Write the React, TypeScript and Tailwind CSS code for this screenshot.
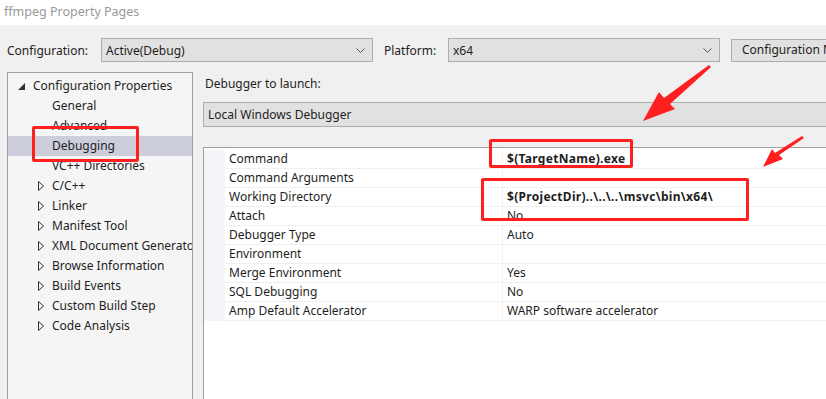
import React from "react";

const font = { fontFamily: '"Noto Sans", "Open Sans", sans-serif' };

function Chevron() {
  return (
    <svg width="9" height="6" viewBox="0 0 9 6" className="shrink-0">
      <polyline points="0.5,0.5 4.5,4.5 8.5,0.5" fill="none" stroke="#555" strokeWidth="1" />
    </svg>
  );
}

function Collapsed() {
  return (
    <svg width="6" height="10" viewBox="0 0 6 10" className="shrink-0">
      <polygon points="0.5,0.5 5.5,5 0.5,9.5" fill="none" stroke="#333" strokeWidth="1" />
    </svg>
  );
}

function Expanded() {
  return (
    <svg width="7" height="7" viewBox="0 0 7 7" className="shrink-0">
      <polygon points="7,0 7,7 0,7" fill="#333" />
    </svg>
  );
}

const tree: { label: string; level: 0 | 1 | 2; sel?: boolean }[] = [
  { label: "Configuration Properties", level: 0 },
  { label: "General", level: 1 },
  { label: "Advanced", level: 1 },
  { label: "Debugging", level: 1, sel: true },
  { label: "VC++ Directories", level: 1 },
  { label: "C/C++", level: 2 },
  { label: "Linker", level: 2 },
  { label: "Manifest Tool", level: 2 },
  { label: "XML Document Generator", level: 2 },
  { label: "Browse Information", level: 2 },
  { label: "Build Events", level: 2 },
  { label: "Custom Build Step", level: 2 },
  { label: "Code Analysis", level: 2 },
];

const props: { name: string; value: string; bold?: boolean }[] = [
  { name: "Command", value: "$(TargetName).exe", bold: true },
  { name: "Command Arguments", value: "" },
  { name: "Working Directory", value: "$(ProjectDir)..\\..\\..\\msvc\\bin\\x64\\", bold: true },
  { name: "Attach", value: "No" },
  { name: "Debugger Type", value: "Auto" },
  { name: "Environment", value: "" },
  { name: "Merge Environment", value: "Yes" },
  { name: "SQL Debugging", value: "No" },
  { name: "Amp Default Accelerator", value: "WARP software accelerator" },
];

export default function App() {
  return (
    <div
      className="relative w-[826px] h-[399px] overflow-hidden bg-[#f0f0f0] text-[12px] text-[#1e1e1e]"
      style={font}
    >
      {/* title bar */}
      <div className="h-[25px] bg-white flex items-center pl-[4px] text-[12.5px] text-[#999999]">
        ffmpeg Property Pages
      </div>

      {/* configuration row */}
      <div className="mt-[13px] h-[24px] flex items-center w-[900px]">
        <div className="ml-[7px] w-[94px] shrink-0 whitespace-nowrap pt-[1px]">Configuration:</div>
        <div className="w-[272px] shrink-0 h-[24px] bg-[#e1e1e1] border border-[#adadad] flex items-center justify-between pl-[4px] pr-[7px] pt-[1px]">
          <span>Active(Debug)</span>
          <Chevron />
        </div>
        <div className="ml-[11px] w-[64px] shrink-0 whitespace-nowrap pt-[1px]">Platform:</div>
        <div className="w-[272px] shrink-0 h-[24px] bg-[#e1e1e1] border border-[#adadad] flex items-center justify-between pl-[4px] pr-[7px] pt-[1px]">
          <span>x64</span>
          <Chevron />
        </div>
        <div className="ml-[11px] w-[150px] shrink-0 h-[23px] bg-[#e1e1e1] border border-[#adadad] flex items-center pl-[10px] whitespace-nowrap">
          Configuration Manager...
        </div>
      </div>

      {/* main */}
      <div className="mt-[10px] flex">
        {/* tree */}
        <div className="ml-[7px] w-[186px] h-[340px] shrink-0 bg-[#f5f5f5] border border-[#a0a0a0] pt-[3px] overflow-hidden">
          {tree.map((t) => (
            <div
              key={t.label}
              className={`h-[20px] flex items-center whitespace-nowrap overflow-hidden ${t.sel ? "bg-[#cccedb]" : ""}`}
            >
              {t.level === 0 && (
                <>
                  <div className="w-[12px] shrink-0 pl-[10px] box-content flex items-center">
                    <Expanded />
                  </div>
                  <span className="ml-[3px]">{t.label}</span>
                </>
              )}
              {t.level === 1 && <span className="ml-[44px]">{t.label}</span>}
              {t.level === 2 && (
                <>
                  <div className="ml-[30px] w-[14px] shrink-0 flex items-center">
                    <Collapsed />
                  </div>
                  <span className="shrink-0">{t.label}</span>
                </>
              )}
            </div>
          ))}
        </div>

        {/* right */}
        <div className="ml-[10px] flex-1 min-w-0">
          <div className="h-[22px] flex items-center pl-[2px] pt-[2px]">Debugger to launch:</div>
          <div className="mt-[8px] h-[25px] bg-[#e1e1e1] border border-[#adadad] border-r-0 flex items-center pl-[4px] pt-[1px]">
            Local Windows Debugger
          </div>
          <div className="mt-[20px] h-[260px] bg-white border-t border-l border-[#a0a0a0] pt-[2px]">
            {props.map((p) => (
              <div key={p.name} className="h-[19px] flex">
                <div className="w-[21px] shrink-0 bg-[#f3f5fa]" />
                <div className="w-[278px] shrink-0 border-b border-r border-[#eef0f4] flex items-center pl-[4px] whitespace-nowrap">
                  {p.name}
                </div>
                <div
                  className={`flex-1 border-b border-[#eef0f4] flex items-center pl-[4px] whitespace-nowrap ${p.bold ? "font-bold tracking-[0.3px]" : ""}`}
                >
                  {p.value}
                </div>
              </div>
            ))}
          </div>
        </div>
      </div>

      {/* annotations */}
      <div className="absolute left-[32px] top-[126px] w-[107px] h-[36px] border-[3px] border-[#ff1f1f] rounded-[2px]" />
      <div className="absolute left-[489px] top-[139px] w-[144px] h-[29px] border-[3px] border-[#ff1f1f] rounded-[2px]" />
      <div className="absolute left-[481px] top-[178px] w-[268px] h-[43px] border-[3px] border-[#ff1f1f] rounded-[2px]" />
      <svg className="absolute left-0 top-0" width="826" height="399" viewBox="0 0 826 399">
        <polygon points="711,67 670,104 675,109 643,121 659,92 664,98 709,65" fill="#ff1f1f" />
        <polygon points="804,138 779,155 783,159 763,167 772,149 775,153 802,136" fill="#ff1f1f" />
      </svg>
    </div>
  );
}
